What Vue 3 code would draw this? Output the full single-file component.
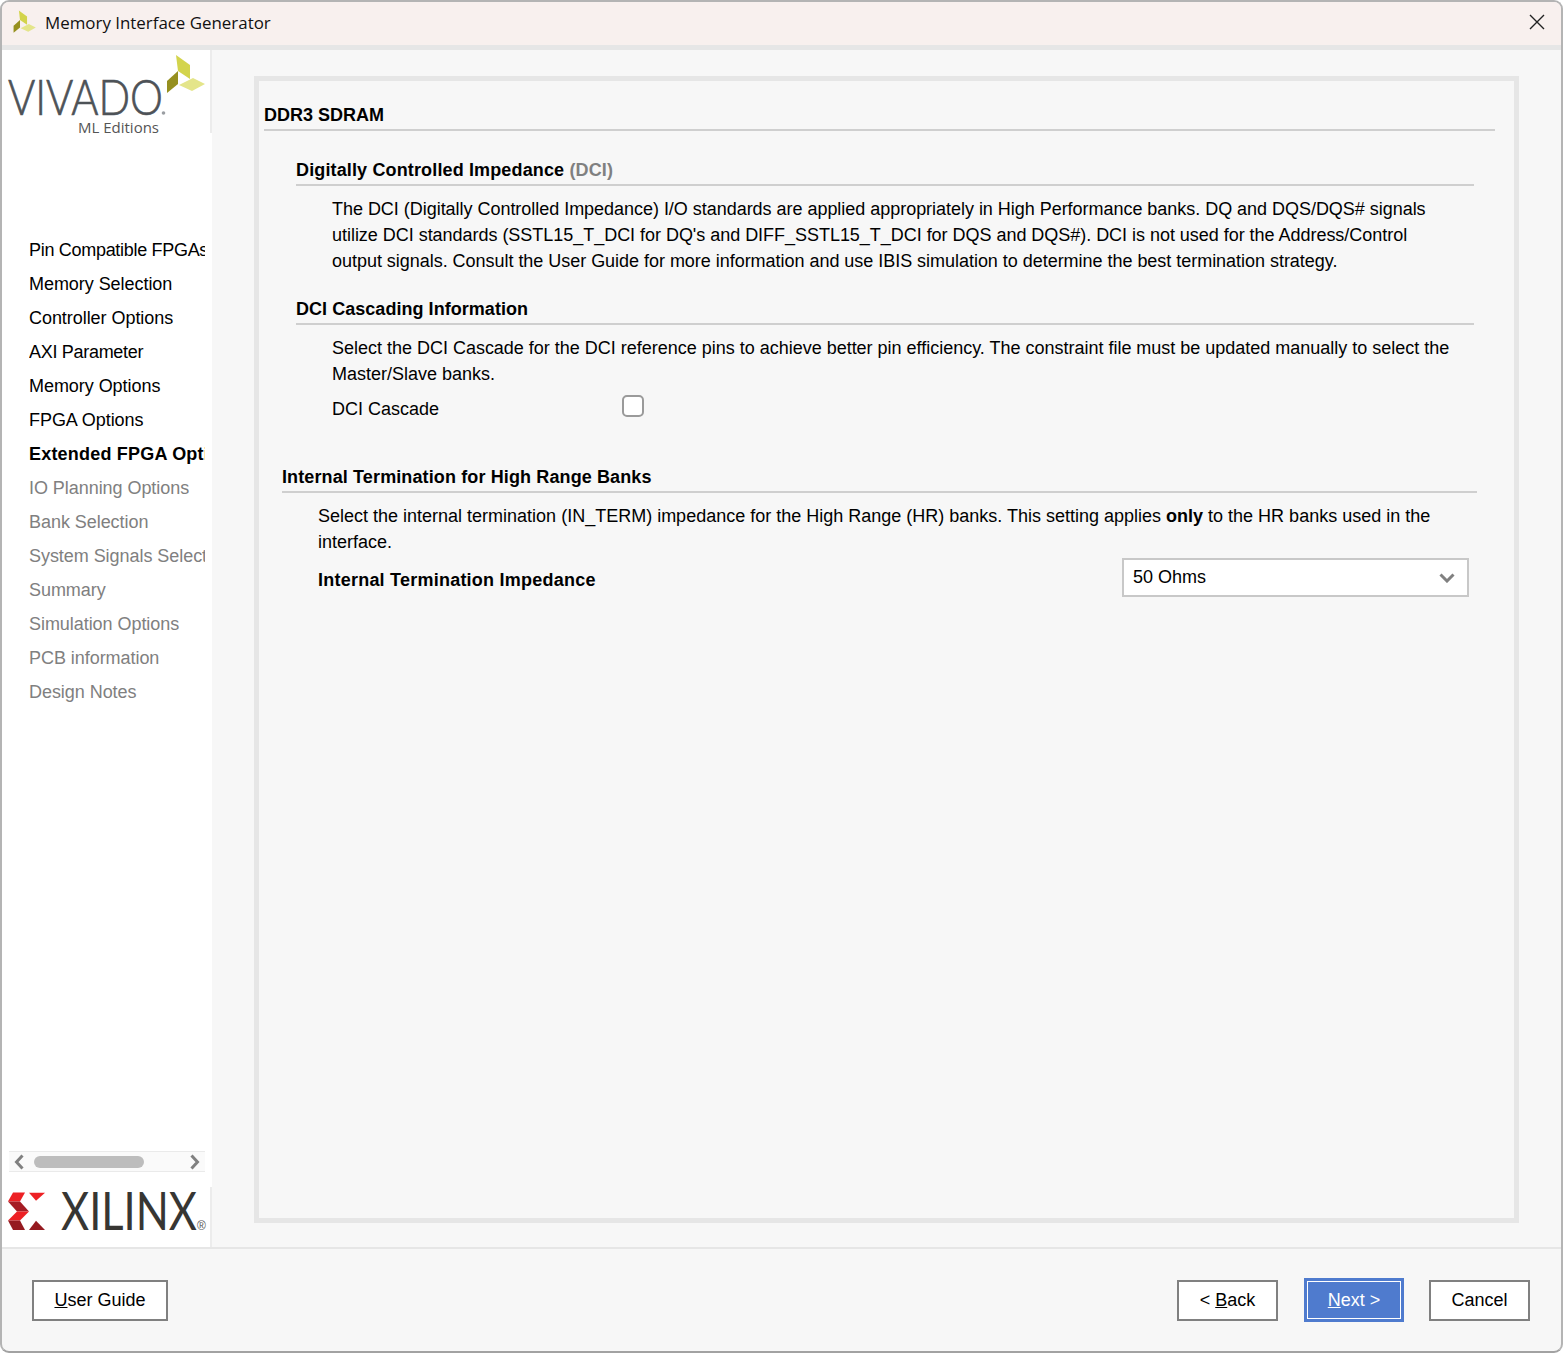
<template>
  <div class="window">
    <div class="titlebar">
      <svg class="app-icon" viewBox="166 54 41 41">
        <polygon points="176,55 190,65 190,79 178,71" fill="#d3d44c" />
        <polygon points="167,81 178,71 178,84 167,93" fill="#96901f" />
        <polygon points="179,85 193,78 205,84 192,91" fill="#e4e58a" />
      </svg>
      <span class="titlebar__text">Memory Interface Generator</span>
      <svg class="close-icon" viewBox="0 0 16 16">
        <path d="M1 1 L15 15 M15 1 L1 15" stroke="#222" stroke-width="1.4" fill="none" />
      </svg>
    </div>

    <div class="content">
      <aside class="sidebar">
        <div class="brand">
          <svg class="brand__logo" viewBox="2 50 208 83">
            <text x="8" y="115" class="vivado" textLength="155" lengthAdjust="spacingAndGlyphs">VIVADO</text>
            <circle cx="163.5" cy="113" r="1.8" fill="#9a9ea2" />
            <text x="78" y="133" class="ml">ML Editions</text>
            <polygon points="176,55 190,65 190,79 178,71" fill="#d3d44c" />
            <polygon points="167,81 178,71 178,84 167,93" fill="#96901f" />
            <polygon points="179,85 193,78 205,84 192,91" fill="#e4e58a" />
          </svg>
        </div>

        <ul class="steps">
          <li v-for="step in steps" :key="step.name" class="steps__item" :class="step.state">{{ step.name }}</li>
        </ul>

        <div class="hscroll">
          <svg class="hscroll__arrow" viewBox="0 0 12 16"><path d="M9.5 1.5 L3.5 8 L9.5 14.5" /></svg>
          <div class="hscroll__thumb"></div>
          <svg class="hscroll__arrow" viewBox="0 0 12 16"><path d="M2.5 1.5 L8.5 8 L2.5 14.5" /></svg>
        </div>

        <div class="xilinx">
          <svg class="xilinx__logo" viewBox="2 1187 208 60">
            <polygon points="13,1192.5 25,1192.5 20,1201.5 8,1201.5" fill="#ed2024" />
            <polygon points="8,1201.5 20,1201.5 29,1211.5 17,1211.5" fill="#a51c24" />
            <polygon points="17,1211.5 29,1211.5 20,1220.5 8,1220.5" fill="#ed2024" />
            <polygon points="8,1220.5 20,1220.5 25,1230 13,1230" fill="#951a20" />
            <polygon points="29,1192.7 45,1192.7 36,1200.7" fill="#ed2024" />
            <polygon points="29,1230 36,1220.7 45,1230" fill="#951a20" />
            <text x="61" y="1230" class="xilinx__word" textLength="136" lengthAdjust="spacingAndGlyphs">XILINX</text>
            <text x="197" y="1230" class="xilinx__reg">®</text>
          </svg>
        </div>
      </aside>

      <main class="main">
        <div class="panel">
          <h1 class="panel__title">DDR3 SDRAM</h1>

          <section class="group group--dci">
            <h2 class="group__title">Digitally Controlled Impedance <span class="muted">(DCI)</span></h2>
            <p class="group__text">
              The DCI (Digitally Controlled Impedance) I/O standards are applied appropriately in High Performance banks. DQ and DQS/DQS# signals utilize DCI standards (SSTL15_T_DCI for DQ's and DIFF_SSTL15_T_DCI for DQS and DQS#). DCI is not used for the Address/Control output signals. Consult the User Guide for more information and use IBIS simulation to determine the best termination strategy.
            </p>
          </section>

          <section class="group group--cascade">
            <h2 class="group__title">DCI Cascading Information</h2>
            <p class="group__text">
              Select the DCI Cascade for the DCI reference pins to achieve better pin efficiency. The constraint file must be updated manually to select the Master/Slave banks.
            </p>
            <div class="cascade-row">
              <span class="cascade-row__label">DCI Cascade</span>
              <span class="checkbox"></span>
            </div>
          </section>

          <section class="group group--term">
            <h2 class="group__title">Internal Termination for High Range Banks</h2>
            <p class="group__text">
              Select the internal termination (IN_TERM) impedance for the High Range (HR) banks. This setting applies <b>only</b> to the HR banks used in the interface.
            </p>
            <div class="term-row">
              <span class="term-row__label">Internal Termination Impedance</span>
              <div class="select">
                <span>{{ impedance }}</span>
                <svg class="select__arrow" viewBox="0 0 16 10"><path d="M1.5 1.5 L8 8 L14.5 1.5" /></svg>
              </div>
            </div>
          </section>
        </div>
      </main>
    </div>

    <footer class="footer">
      <button class="btn btn--guide"><u>U</u>ser Guide</button>
      <div class="footer__nav">
        <button class="btn btn--back">&lt; <u>B</u>ack</button>
        <button class="btn btn--next"><u>N</u>ext &gt;</button>
        <button class="btn btn--cancel">Cancel</button>
      </div>
    </footer>
  </div>
</template>

<script setup>
const impedance = '50 Ohms'

const steps = [
  { name: 'Pin Compatible FPGAs', state: 'is-tight' },
  { name: 'Memory Selection', state: '' },
  { name: 'Controller Options', state: '' },
  { name: 'AXI Parameter', state: 'is-tight' },
  { name: 'Memory Options', state: '' },
  { name: 'FPGA Options', state: '' },
  { name: 'Extended FPGA Options', state: 'is-current' },
  { name: 'IO Planning Options', state: 'is-pending' },
  { name: 'Bank Selection', state: 'is-pending' },
  { name: 'System Signals Selection', state: 'is-pending' },
  { name: 'Summary', state: 'is-pending' },
  { name: 'Simulation Options', state: 'is-pending' },
  { name: 'PCB information', state: 'is-pending' },
  { name: 'Design Notes', state: 'is-pending' }
]
</script>

<style>
html, body {
  margin: 0;
  background: #fff;
}
</style>

<style scoped>
.window {
  box-sizing: border-box;
  width: 1563px;
  height: 1353px;
  display: flex;
  flex-direction: column;
  overflow: hidden;
  border: 2px solid #b4b4b4;
  border-bottom-color: #a2a2a2;
  border-radius: 9px;
  background: #f7f7f7;
  color: #000;
  font-family: "Liberation Sans", Arial, sans-serif;
  font-size: 18px;
  line-height: 26px;
}

.titlebar {
  flex: none;
  height: 43px;
  display: flex;
  align-items: center;
  padding: 0 16px 0 11px;
  background: #f8f0ee;
}

.app-icon {
  width: 24px;
  height: 24px;
  margin: 0 8px 3px 0;
}

.titlebar__text {
  flex: 1;
  margin-bottom: 2px;
  font-family: "Open Sans", sans-serif;
  font-size: 16.9px;
  color: #111;
}

.close-icon {
  width: 16px;
  height: 16px;
  margin-bottom: 3px;
}

.content {
  flex: 1;
  min-height: 0;
  display: flex;
  border-top: 5px solid #e6e6e6;
}

.sidebar {
  flex: none;
  width: 210px;
  display: flex;
  flex-direction: column;
  background: #fff;
}

.brand {
  height: 83px;
  border-right: 2px solid #ececec;
}

.brand__logo {
  display: block;
  width: 208px;
  height: 83px;
  overflow: visible;
}

.vivado {
  font-family: Lato, sans-serif;
  font-weight: 300;
  font-size: 49px;
  fill: #4d5257;
  stroke: #4d5257;
  stroke-width: 0.7;
}

.ml {
  font-family: "Open Sans", sans-serif;
  font-size: 15px;
  fill: #555;
}

.steps {
  flex: 1;
  list-style: none;
  margin: 100px 0 0;
  padding: 0 7px 0 27px;
}

.steps__item {
  height: 34px;
  line-height: 34px;
  white-space: nowrap;
  overflow: hidden;
  letter-spacing: -0.05px;
}

.is-tight {
  letter-spacing: -0.3px;
}

.is-current {
  font-weight: 700;
  letter-spacing: 0.2px;
}

.is-pending {
  color: #808080;
}

.hscroll {
  flex: none;
  height: 19px;
  margin: 0 7px 15px 7px;
  display: flex;
  align-items: center;
  padding: 0 4px 0 4px;
  background: #fafafa;
  border-top: 1px solid #eaeaea;
  border-bottom: 1px solid #eaeaea;
}

.hscroll__arrow {
  flex: none;
  width: 12px;
  height: 16px;
  fill: none;
  stroke: #808080;
  stroke-width: 3;
}

.hscroll__thumb {
  width: 110px;
  height: 12px;
  margin: 0 auto 0 9px;
  border-radius: 6px;
  background: #bdbdbd;
}

.xilinx {
  flex: none;
  height: 60px;
  border-right: 2px solid #ececec;
}

.xilinx__logo {
  display: block;
  width: 208px;
  height: 60px;
  overflow: visible;
}

.xilinx__word {
  font-family: Lato, sans-serif;
  font-weight: 400;
  font-size: 53px;
  fill: #373633;
}

.xilinx__reg {
  font-family: "Liberation Sans", sans-serif;
  font-size: 12px;
  fill: #555;
}

.main {
  flex: 1;
  min-width: 0;
  padding: 26px 42px 24px 42px;
}

.panel {
  box-sizing: border-box;
  height: 100%;
  padding: 21px 19px 0 5px;
  border: 5px solid #e6e6e6;
}

.panel__title {
  margin: 0;
  padding-bottom: 1px;
  font-size: 18px;
  line-height: 26px;
  font-weight: 700;
  border-bottom: 2px solid #cfcfcf;
}

.group__title {
  margin: 0;
  padding-bottom: 1px;
  font-size: 18px;
  line-height: 26px;
  font-weight: 700;
  border-bottom: 2px solid #cfcfcf;
}

.muted {
  color: #808080;
}

.group__text {
  margin: 10px 0 0;
  padding: 0 15px 0 36px;
}

.group--dci {
  margin: 26px 21px 0 32px;
}

.group--dci .group__title {
  letter-spacing: 0.14px;
}

.group--dci .group__text {
  letter-spacing: -0.03px;
}

.group--cascade {
  margin: 22px 21px 0 32px;
}

.group--cascade .group__title {
  letter-spacing: 0.04px;
}

.group--cascade .group__text {
  letter-spacing: -0.01px;
}

.group--term {
  margin: 42px 18px 0 18px;
}

.group--term .group__title {
  letter-spacing: 0.12px;
}

.cascade-row {
  display: flex;
  margin-top: 9px;
  padding-left: 36px;
}

.cascade-row__label {
  width: 290px;
}

.checkbox {
  box-sizing: border-box;
  width: 22px;
  height: 22px;
  margin-top: -1px;
  background: #fff;
  border: 2px solid #9a9a9a;
  border-radius: 5px;
}

.term-row {
  display: flex;
  justify-content: space-between;
  margin: 4px 8px 0 0;
  padding-left: 36px;
}

.term-row__label {
  margin-top: 8px;
  font-weight: 700;
  letter-spacing: 0.23px;
}

.select {
  box-sizing: border-box;
  width: 347px;
  height: 39px;
  margin-top: -1px;
  display: flex;
  align-items: center;
  justify-content: space-between;
  padding: 0 12px 1px 9px;
  background: #fff;
  border: 2px solid #c8c8c8;
}

.select__arrow {
  width: 16px;
  height: 10px;
  margin-top: 1px;
  fill: none;
  stroke: #808080;
  stroke-width: 3;
}

.footer {
  flex: none;
  height: 104px;
  box-sizing: border-box;
  display: flex;
  align-items: center;
  justify-content: space-between;
  padding: 0 31px 0 30px;
  border-top: 2px solid #e6e6e6;
}

.footer__nav {
  display: flex;
  align-items: center;
}

.btn {
  box-sizing: border-box;
  height: 41px;
  padding: 0;
  background: #fff;
  border: 2px solid #808080;
  font-family: inherit;
  font-size: 18px;
  color: #000;
}

.btn--guide {
  width: 136px;
}

.btn--back {
  width: 101px;
  margin-right: 26px;
}

.btn--next {
  width: 100px;
  height: 44px;
  margin-right: 25px;
  background: #4f7bce;
  border: 3px solid #4f7bce;
  box-shadow: inset 0 0 0 1px #fff;
  color: #fff;
}

.btn--cancel {
  width: 101px;
}
</style>
